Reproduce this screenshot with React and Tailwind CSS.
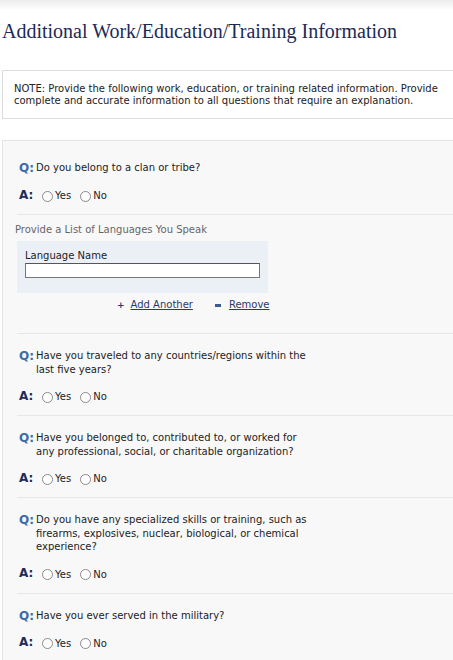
import React from "react";

const F = { fontFamily: '"DejaVu Sans", Verdana, sans-serif' };

function Radio({ label, gap }) {
  return (
    <label className={"flex items-center gap-[2px] " + gap}>
      <span className="inline-block w-[11px] h-[11px] rounded-full border border-[#8a8a8a] bg-white"></span>
      <span>{label}</span>
    </label>
  );
}

function QA({ q, last, first }) {
  return (
    <div className={"ml-[14px] pb-[11px] " + (first ? "pt-[20px] " : "pt-[15px] ") + (last ? "" : "border-b border-[#e6e6e6]")}>
      <div className="flex">
        <span className="text-[#3c6ca8] font-bold text-[12px] leading-[14px] w-[19px] shrink-0 pl-[2px]">Q:</span>
        <span className="text-[10px] leading-[13.5px] text-[#222] max-w-[276px]">{q}</span>
      </div>
      <div className="flex items-center mt-[14px] text-[10px] leading-[14px] text-[#222]">
        <span className="text-[#1d2b57] font-bold text-[12px] w-[25px] pl-[2px] leading-[14px] -mt-[3px]">A:</span>
        <Radio label="Yes" gap="mr-[9px]" />
        <Radio label="No" gap="" />
      </div>
    </div>
  );
}

export default function App() {
  return (
    <div style={F} className="w-[453px] h-[660px] bg-white overflow-hidden">
      <div className="h-[10px] bg-gradient-to-b from-[#ececec] to-white"></div>
      <h1
        className="text-[20px] leading-[24px] text-[#1c2a56] pl-[2px] mt-[9px]"
        style={{ fontFamily: '"Liberation Serif", "Times New Roman", serif' }}
      >
        Additional Work/Education/Training Information
      </h1>
      <div className="mt-[27px] ml-[2px] border border-r-0 border-[#dcdcdc] bg-white pl-[11px] pt-[12px] pb-[11px] text-[10px] leading-[12px] text-[#222] whitespace-nowrap">
        NOTE: Provide the following work, education, or training related information. Provide
        <br />
        complete and accurate information to all questions that require an explanation.
      </div>
      <div className="mt-[21px] ml-[2px] border-l border-t border-[#e4e4e4] bg-[#f8f8f8] h-[600px]">
        <QA first q="Do you belong to a clan or tribe?" />
        <div className="ml-[14px] border-b border-[#e6e6e6] pb-[22px]">
          <div className="text-[10px] text-[#666] mt-[9px] leading-[12px] -ml-[2px]">
            Provide a List of Languages You Speak
          </div>
          <div className="mt-[5px] w-[251px] bg-[#ebf0f7] pt-[9px] pb-[15px] pl-[8px]">
            <div className="text-[10px] text-[#222] leading-[12px]">Language Name</div>
            <div className="mt-[1px] w-[235px] h-[15px] bg-white border border-[#777] border-t-[#555]"></div>
          </div>
          <div className="flex text-[10px] text-[#2b3a68] mt-[6px] ml-[100px] leading-[12px]">
            <span className="flex items-center">
              <span className="text-[9px] font-bold mr-[6px]">+</span>
              <span className="underline">Add Another</span>
            </span>
            <span className="flex items-center ml-[22px]">
              <span className="inline-block w-[6px] h-[3px] bg-[#3c5a8f] mr-[8px]"></span>
              <span className="underline">Remove</span>
            </span>
          </div>
        </div>
        <QA q="Have you traveled to any countries/regions within the last five years?" />
        <QA q="Have you belonged to, contributed to, or worked for any professional, social, or charitable organization?" />
        <QA q="Do you have any specialized skills or training, such as firearms, explosives, nuclear, biological, or chemical experience?" />
        <QA q="Have you ever served in the military?" last />
      </div>
    </div>
  );
}
